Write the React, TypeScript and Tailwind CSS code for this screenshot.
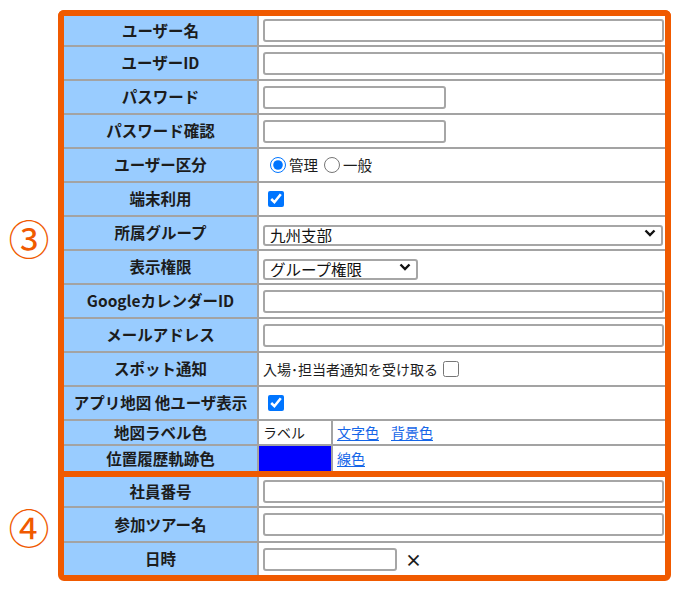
import type { ReactNode } from "react";
import clsx from "clsx";

function Row({
  label,
  h,
  last,
  bare,
  children,
}: {
  label: string;
  h: string;
  last?: boolean;
  bare?: boolean;
  children?: ReactNode;
}) {
  return (
    <div className={clsx("flex", h, !last && "border-b-2 border-[#a3a3a3]")}>
      <div className="w-[195px] shrink-0 bg-[#99ccff] border-r-2 border-[#a3a3a3] flex items-center justify-center text-[15.5px] font-bold text-[#1c1c1c] whitespace-nowrap">
        {label}
      </div>
      <div className={clsx("flex-1 flex items-center bg-white", !bare && "pl-[4px]")}>{children}</div>
    </div>
  );
}

function TextBox({ w }: { w: string }) {
  return (
    <input
      type="text"
      className={clsx("h-[23px] border-2 border-[#a6a6a6] rounded-[3px] bg-white px-1 text-[14px] outline-none", w)}
    />
  );
}

function SelectBox({ w, value, options }: { w: string; value: string; options: string[] }) {
  return (
    <div className={clsx("relative h-[21px]", w)}>
      <select
        defaultValue={value}
        className="appearance-none w-full h-full border-2 border-[#a6a6a6] rounded-[3px] bg-white pl-[5px] text-[15.5px] leading-none text-[#111] outline-none"
      >
        {options.map((o) => (
          <option key={o}>{o}</option>
        ))}
      </select>
      <svg
        className="absolute right-[7px] top-[6px] pointer-events-none"
        width="12"
        height="8"
        viewBox="0 0 12 8"
      >
        <path d="M1.5 1.5 L6 6 L10.5 1.5" fill="none" stroke="#111" strokeWidth="2.4" />
      </svg>
    </div>
  );
}

function Check({ checked, className }: { checked?: boolean; className?: string }) {
  return (
    <input
      type="checkbox"
      defaultChecked={checked}
      className={clsx("w-4 h-4 m-0 accent-[#0075ff]", className)}
    />
  );
}

export default function App() {
  return (
    <div className="w-[686px] h-[591px] bg-white pt-[10px] font-['Noto_Sans_CJK_JP','Noto_Sans',sans-serif] text-[#1c1c1c]">
      <div className="grid grid-cols-[58px_613px]">
        <div className="flex items-center justify-center pb-[6px]">
          <span className="text-[41px] leading-none text-[#f05a00]">③</span>
        </div>
        <div className="border-[6px] border-b-0 border-[#f05a00] rounded-t-[6px] flex flex-col">
          <Row label="ユーザー名" h="h-[31px]">
            <TextBox w="w-[401px]" />
          </Row>
          <Row label="ユーザーID" h="h-[34px]">
            <TextBox w="w-[401px]" />
          </Row>
          <Row label="パスワード" h="h-[34px]">
            <input type="password" className="h-[23px] w-[183px] border-2 border-[#a6a6a6] rounded-[3px] bg-white outline-none" />
          </Row>
          <Row label="パスワード確認" h="h-[34px]">
            <input type="password" className="h-[23px] w-[183px] border-2 border-[#a6a6a6] rounded-[3px] bg-white outline-none" />
          </Row>
          <Row label="ユーザー区分" h="h-[34px]">
            <label className="flex items-center ml-[7px]">
              <input type="radio" name="kubun" defaultChecked className="w-4 h-4 m-0 accent-[#0075ff]" />
              <span className="ml-[3px] text-[14.5px]">管理</span>
            </label>
            <label className="flex items-center ml-[6px]">
              <input type="radio" name="kubun" className="w-4 h-4 m-0 accent-[#0075ff]" />
              <span className="ml-[3px] text-[14.5px]">一般</span>
            </label>
          </Row>
          <Row label="端末利用" h="h-[34px]">
            <Check checked className="ml-[5px]" />
          </Row>
          <Row label="所属グループ" h="h-[34px]">
            <SelectBox w="w-[400px]" value="九州支部" options={["九州支部", "本社", "関西支部"]} />
          </Row>
          <Row label="表示権限" h="h-[34px]">
            <SelectBox w="w-[155px]" value="グループ権限" options={["グループ権限", "全体権限", "個人権限"]} />
          </Row>
          <Row label="GoogleカレンダーID" h="h-[34px]">
            <TextBox w="w-[401px]" />
          </Row>
          <Row label="メールアドレス" h="h-[34px]">
            <TextBox w="w-[401px]" />
          </Row>
          <Row label="スポット通知" h="h-[34px]">
            <span className="text-[14px] whitespace-nowrap">入場･担当者通知を受け取る</span>
            <Check className="ml-[5px]" />
          </Row>
          <Row label="アプリ地図 他ユーザ表示" h="h-[34px]">
            <Check checked className="ml-[5px]" />
          </Row>
          <Row label="地図ラベル色" h="h-[25px]" bare>
            <div className="w-[74px] h-full border-r-2 border-[#a3a3a3] flex items-center pl-[4px] text-[14px]">
              ラベル
            </div>
            <a href="#" className="ml-[4px] text-[14px] text-[#1566e8] underline underline-offset-2">
              文字色
            </a>
            <a href="#" className="ml-[12px] text-[14px] text-[#1566e8] underline underline-offset-2">
              背景色
            </a>
          </Row>
          <Row label="位置履歴軌跡色" h="h-[25px]" last bare>
            <div className="w-[74px] h-full border-r-2 border-[#a3a3a3] bg-[#0000ff]" />
            <a href="#" className="ml-[4px] text-[14px] text-[#1566e8] underline underline-offset-2">
              線色
            </a>
          </Row>
        </div>

        <div className="flex items-center justify-center">
          <span className="text-[41px] leading-none text-[#f05a00]">④</span>
        </div>
        <div className="border-[6px] border-[#f05a00] rounded-b-[6px] flex flex-col">
          <Row label="社員番号" h="h-[31px]">
            <TextBox w="w-[401px]" />
          </Row>
          <Row label="参加ツアー名" h="h-[35px]">
            <TextBox w="w-[401px]" />
          </Row>
          <Row label="日時" h="h-[32px]" last>
            <TextBox w="w-[134px]" />
            <span className="ml-[8px] text-[17px] font-bold leading-none">×</span>
          </Row>
        </div>
      </div>
    </div>
  );
}
